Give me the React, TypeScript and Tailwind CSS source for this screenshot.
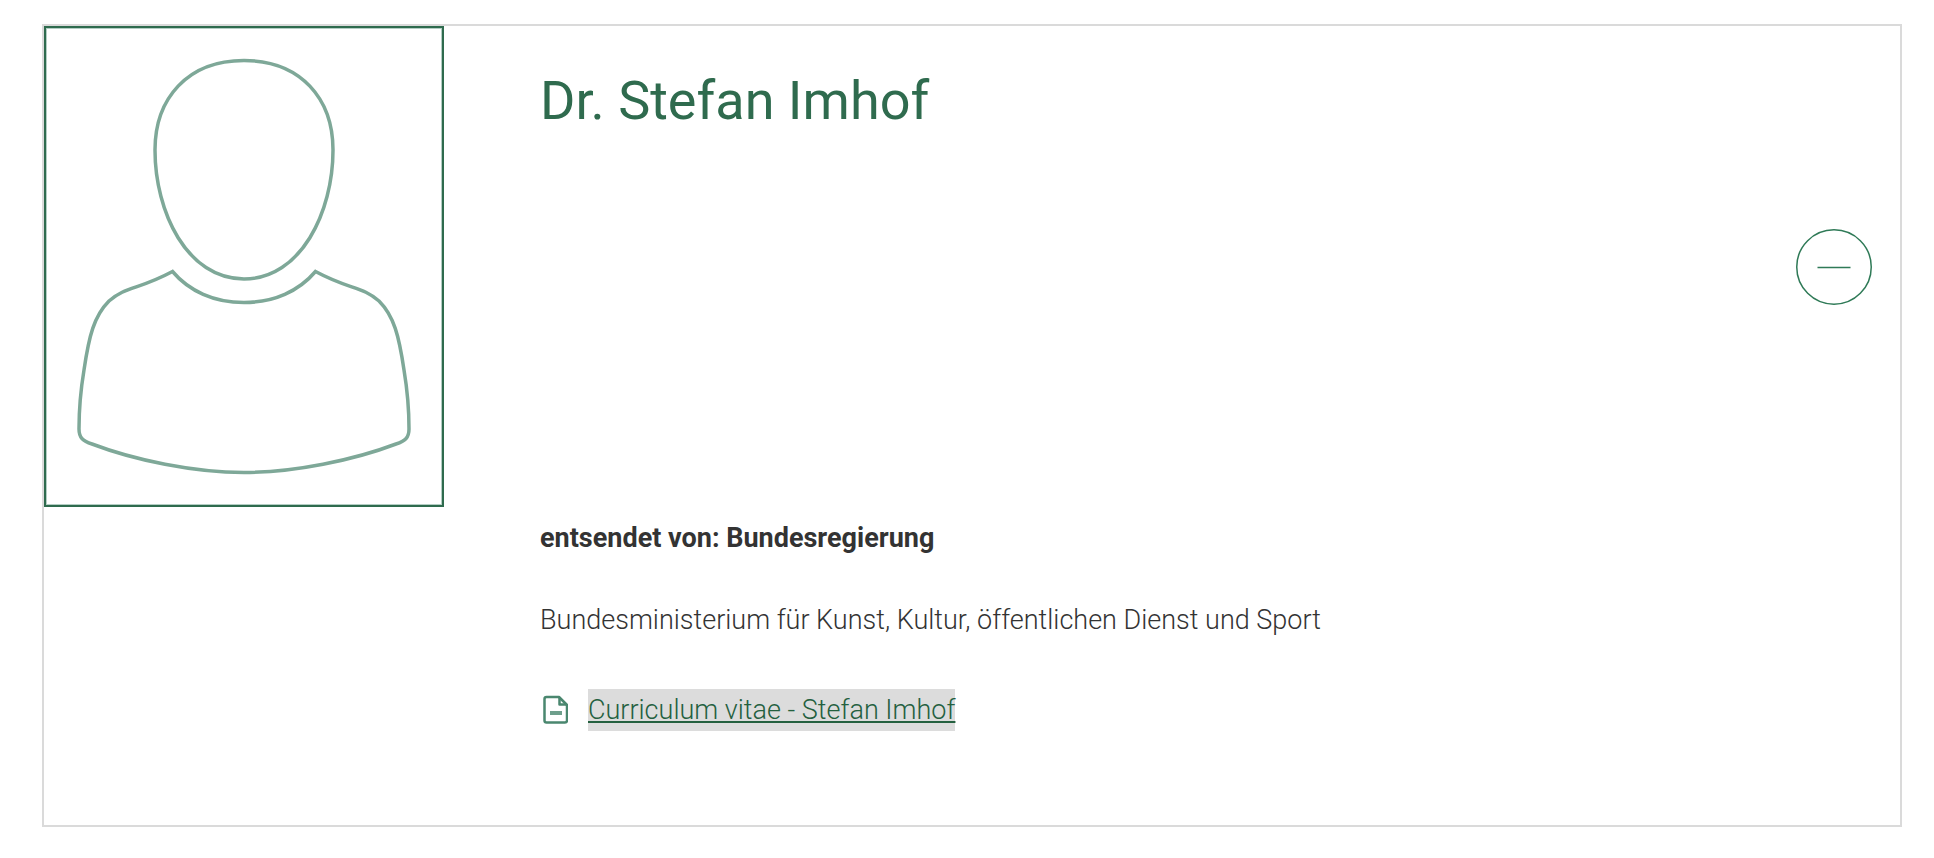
import { useState } from "react";

const member = {
  name: "Dr. Stefan Imhof",
  delegatedBy: "entsendet von: Bundesregierung",
  organisation: "Bundesministerium für Kunst, Kultur, öffentlichen Dienst und Sport",
  cv: "Curriculum vitae - Stefan Imhof",
};

function Silhouette() {
  return (
    <svg viewBox="0 0 400 481" className="block w-full" fill="none" role="img" aria-label={member.name}>
      <rect x="2.5" y="2.5" width="395" height="476" stroke="#b3cec4" />
      <rect x="1" y="1" width="398" height="479" stroke="#2f6b4e" strokeWidth="2" />
      <g stroke="#7ea898" strokeWidth="3.5">
        {/* head */}
        <path d="M200 34.5C143 34.5 111 73 111 124C111 186 143 253 200 253C257 253 289 186 289 124C289 73 257 34.5 200 34.5Z" />
        {/* shoulders */}
        <path d="M128.500 245.500C145 265 170 276.500 200 276.500C230 276.500 255 265 271.500 245.500C306 264 318 260 335 275C350 290 355 310 360 344C363 362 365 382 365 403C365 412 361 415 352 418C310 434 250 446.500 200 446.500C150 446.500 90 434 48 418C39 415 35 412 35 403C35 382 37 362 40 344C45 310 50 290 65 275C82 260 94 264 128.500 245.500Z" />
      </g>
    </svg>
  );
}

function DocumentIcon() {
  return (
    <svg width="28" height="32" viewBox="0 0 28 32" fill="none" stroke="#4a876f" strokeWidth="2.5" strokeLinejoin="round" aria-hidden="true">
      <path d="M6.500 3H19L27 11V26.500Q27 28.500 25 28.500H6.500Q4.500 28.500 4.500 26.500V5Q4.500 3 6.500 3Z" />
      <path d="M19.500 3V10.500H27" />
      <path d="M10 19H22" strokeWidth="4" opacity="0.8" />
    </svg>
  );
}

export default function App() {
  const [open, setOpen] = useState(true);

  return (
    <main className="min-h-screen bg-white pt-6 pr-8 pb-8 pl-[42px] font-['Roboto',sans-serif] text-[27px] leading-[42px] text-[#444444]">
      <article className="flex items-start border-2 border-[#dadada]">
        <div className="w-[400px] shrink-0">
          <Silhouette />
        </div>

        <div className="ml-24 min-w-0 flex-1">
          <header className="flex h-[482px] items-center justify-between pr-7">
            <h1 className="self-start pt-9 text-[54px] leading-[78px] font-normal text-[#2f6b4e]">{member.name}</h1>
            <button
              type="button"
              aria-expanded={open}
              aria-label="Details"
              onClick={() => setOpen(!open)}
              className="flex size-[76px] shrink-0 items-center justify-center text-[#2f7a57]"
            >
              <svg viewBox="0 0 76 76" className="size-full" fill="none" stroke="currentColor" strokeWidth="1.5">
                <circle cx="38" cy="38" r="37.250" />
                <path d="M21.500 38.500H54.500" />
                {!open && <path d="M38 21.500V54.500" />}
              </svg>
            </button>
          </header>

          {open && (
            <div className="flex flex-col gap-10 pt-[9px] pr-7 pb-[94px]">
              <p className="font-bold text-[#333333]">{member.delegatedBy}</p>
              <p className="font-light text-[#333333]">{member.organisation}</p>
              <p className="flex items-center gap-5 pt-2 font-light">
                <DocumentIcon />
                <a href="#lebenslauf" className="bg-[#dcdcdc] text-[#24603f] underline decoration-2 underline-offset-2">
                  {member.cv}
                </a>
              </p>
            </div>
          )}
        </div>
      </article>
    </main>
  );
}
